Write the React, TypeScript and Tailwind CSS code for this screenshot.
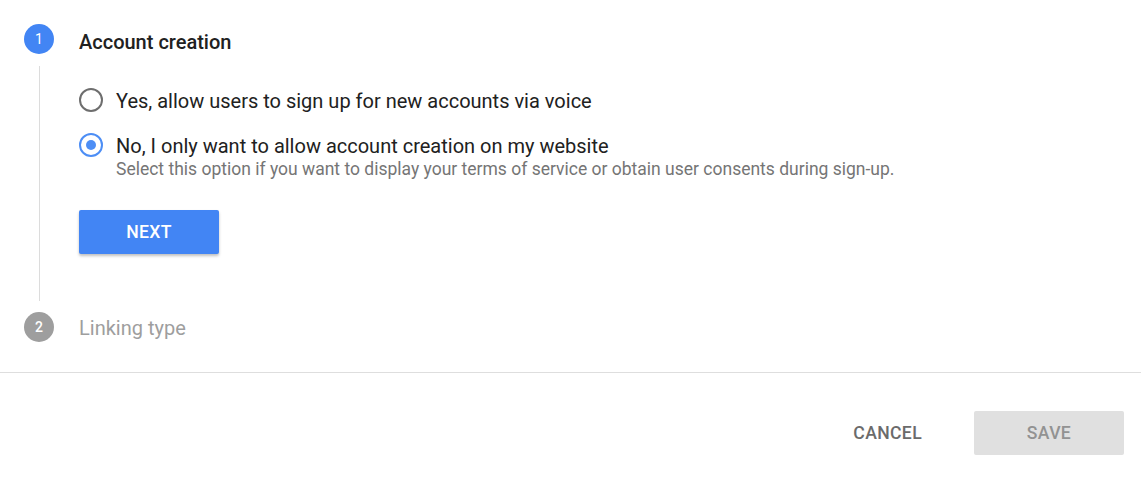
import { useState } from "react";

const options = [
  {
    id: "voice",
    label: "Yes, allow users to sign up for new accounts via voice",
  },
  {
    id: "website",
    label: "No, I only want to allow account creation on my website",
    hint: "Select this option if you want to display your terms of service or obtain user consents during sign-up.",
  },
];

const Radio = ({ checked }: { checked: boolean }) => (
  <span
    className={`flex h-6 w-6 shrink-0 items-center justify-center rounded-full border-[2.5px] ${
      checked ? "border-[#4d8ef5]" : "border-[#6e6e6e]"
    }`}
  >
    {checked && <span className="h-[10px] w-[10px] rounded-full bg-[#4d8ef5]" />}
  </span>
);

export default function App() {
  const [selected, setSelected] = useState("website");

  return (
    <div
      className="h-[485px] w-full bg-white text-[#212121]"
      style={{ fontFamily: "Roboto, 'Noto Sans', sans-serif" }}
    >
      <div className="pl-6 pt-6">
        {/* step 1 */}
        <div className="flex">
          <div className="flex w-[30px] flex-col items-center">
            <div className="flex h-[30px] w-[30px] items-center justify-center rounded-full bg-[#4285f4] text-[14px] text-white">
              1
            </div>
            <div className="mb-[11px] mt-3 w-px flex-1 bg-[#dcdcdc]" />
          </div>
          <div className="ml-[25px] flex flex-col">
            <div className="flex h-[30px] items-center pt-[5px] text-[20px] font-medium leading-6">
              Account creation
            </div>
            <div className="flex flex-col pt-[34px]">
              {options.map((o, i) => (
                <label
                  key={o.id}
                  className={`flex cursor-pointer items-start gap-[13px] ${i > 0 ? "mt-[20px]" : ""}`}
                  onClick={() => setSelected(o.id)}
                >
                  <Radio checked={selected === o.id} />
                  <div className="flex flex-col">
                    <span className="pt-[1px] text-[20px] leading-6">{o.label}</span>
                    {o.hint && (
                      <span className="mt-[1px] text-[17.5px] leading-5 text-[#757575]">{o.hint}</span>
                    )}
                  </div>
                </label>
              ))}
              <button className="mt-[31px] h-[44px] w-[140px] rounded-[2px] bg-[#4285f4] text-[17.6px] font-medium tracking-[0.02em] text-white shadow-[0_2px_3px_rgba(0,0,0,0.25)]">
                NEXT
              </button>
              <div className="h-[58px]" />
            </div>
          </div>
        </div>

        {/* step 2 */}
        <div className="flex items-center">
          <div className="flex h-[30px] w-[30px] items-center justify-center rounded-full bg-[#9e9e9e] text-[14px] font-medium text-white">
            2
          </div>
          <div className="ml-[25px] pt-[2px] text-[20px] leading-6 text-[#9e9e9e]">Linking type</div>
        </div>
      </div>

      <div className="mt-[30px] h-px w-full bg-[#dedede]" />

      <div className="flex items-center justify-end pr-[17px] pt-[38px]">
        <button className="h-[44px] px-4 text-[17.6px] font-medium tracking-[0.02em] text-[#6b6b6b]">CANCEL</button>
        <button className="ml-9 h-[44px] w-[150px] rounded-[2px] bg-[#e0e0e0] text-[17.6px] font-medium tracking-[0.02em] text-[#929292]">
          SAVE
        </button>
      </div>
    </div>
  );
}
